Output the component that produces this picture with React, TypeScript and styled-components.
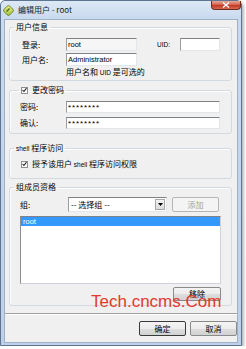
import React from "react";
import styled, { createGlobalStyle } from "styled-components";

const Global = createGlobalStyle`
  html, body { margin: 0; padding: 0; background: #ffffff; }
  body {
    font-family: "Liberation Sans", "Noto Sans CJK SC", sans-serif;
    font-size: 8px;
    color: #000;
  }
  * { box-sizing: border-box; }
`;

const CJK = `"Noto Sans CJK SC", "Liberation Sans", sans-serif`;

const Window = styled.div`
  position: relative;
  width: 242px;
  height: 346px;
  border: 1px solid #5c7593;
  border-radius: 5px 5px 0 0;
  background: linear-gradient(#dde8f5, #c9daee 18px, #c2d4ea 60%, #bfd1e8);
  box-shadow: 2px 2px 3px rgba(0, 0, 0, 0.28);
  display: flex;
  flex-direction: column;
  padding: 0 0 2px 0;
`;

const TitleBar = styled.div`
  height: 18px;
  display: flex;
  align-items: center;
  padding-left: 2px;
  gap: 4px;
`;

const TitleText = styled.span`
  font-family: ${CJK};
  font-size: 8px;
  line-height: 10px;
  color: #1a1a1a;
  flex: 1;
`;

const CloseButton = styled.div`
  align-self: flex-start;
  width: 30px;
  height: 9px;
  border: 1px solid #6e2b20;
  border-top: none;
  border-radius: 0 0 4px 4px;
  background: linear-gradient(#e9a899, #d56650 45%, #c23a24 55%, #d9684f);
  display: flex;
  align-items: center;
  justify-content: center;
`;

const Client = styled.div`
  flex: 1;
  margin: 0 3px;
  background: #f0f0f0;
  border: 1px solid #9fb1c7;
  display: flex;
  flex-direction: column;
`;

const Groups = styled.div`
  display: flex;
  flex-direction: column;
  margin: 0 5px 0 4px;
  padding-top: 2px;
`;

const Group = styled.fieldset<{ $mt: number }>`
  margin: ${(p) => p.$mt}px 0 0 0;
  padding: 0;
  border: 1px solid #d2d9df;
  border-radius: 3px;
  box-shadow: inset 1px 1px 0 #ffffff;
  min-width: 0;
`;

const Legend = styled.legend<{ $ml: number }>`
  margin-left: ${(p) => p.$ml}px;
  padding: 0 2px;
  height: 10px;
  line-height: 10px;
  font-family: ${CJK};
  font-size: 8px;
  display: flex;
  align-items: center;
  gap: 4px;
`;

const GroupBody = styled.div<{ $pt: number; $pb: number; $pl: number }>`
  padding: ${(p) => `${p.$pt}px 10px ${p.$pb}px ${p.$pl}px`};
  display: flex;
  flex-direction: column;
`;

const Row = styled.div<{ $mt?: number; $h: number }>`
  display: flex;
  align-items: center;
  height: ${(p) => p.$h}px;
  margin-top: ${(p) => p.$mt ?? 0}px;
`;

const Label = styled.span<{ $w: number }>`
  width: ${(p) => p.$w}px;
  flex: none;
  font-family: ${CJK};
  font-size: 8px;
  line-height: 10px;
`;

const TextBox = styled.div<{ $w: number; $ro?: boolean }>`
  width: ${(p) => p.$w}px;
  height: 100%;
  flex: none;
  border: 1px solid #e2e7ec;
  border-top-color: #7d8287;
  border-left-color: #9a9ea3;
  background: ${(p) => (p.$ro ? "#f6f6f6" : "#ffffff")};
  font-family: "Liberation Sans", sans-serif;
  font-size: 7.5px;
  line-height: 10px;
  padding: 0 1px;
  display: flex;
  align-items: center;
  white-space: nowrap;
  overflow: hidden;
`;

const Masked = styled.span`
  letter-spacing: 0.9px;
  font-size: 8px;
  padding-top: 2px;
`;

const Note = styled.div`
  margin: 1px 0 0 44px;
  font-family: ${CJK};
  font-size: 8px;
  line-height: 10px;
  height: 10px;
`;

const Check = styled.span`
  width: 7px;
  height: 7px;
  flex: none;
  border: 1px solid #8e8f8f;
  background: #fff;
  display: flex;
  align-items: center;
  justify-content: center;
`;

const CheckText = styled.span`
  font-family: ${CJK};
  font-size: 8px;
  line-height: 10px;
`;

const Small = styled.span`
  font-family: "Liberation Sans", sans-serif;
  font-size: 6.5px;
`;

const Select = styled.div`
  width: 99px;
  height: 100%;
  border: 1px solid #e2e7ec;
  border-top-color: #7d8287;
  border-left-color: #9a9ea3;
  background: #fff;
  display: flex;
  align-items: stretch;
`;

const SelectText = styled.span`
  flex: 1;
  font-family: ${CJK};
  font-size: 8px;
  line-height: 13px;
  padding-left: 2px;
`;

const DropButton = styled.span`
  width: 10px;
  margin: 1px;
  border: 1px solid #a9a9a9;
  background: linear-gradient(#f4f4f4, #dcdcdc);
  display: flex;
  align-items: center;
  justify-content: center;
`;

const Button = styled.div<{ $w: number; $disabled?: boolean; $default?: boolean }>`
  width: ${(p) => p.$w}px;
  height: 100%;
  flex: none;
  border: 1px solid ${(p) => (p.$default ? "#3a3a3a" : p.$disabled ? "#b5b5b5" : "#8a8a8a")};
  border-radius: 2px;
  background: ${(p) =>
    p.$disabled ? "#f4f4f4" : "linear-gradient(#f4f4f4, #ececec 50%, #dedede 51%, #d2d2d2)"};
  color: ${(p) => (p.$disabled ? "#a3a3a3" : "#000")};
  font-family: ${CJK};
  font-size: 8px;
  line-height: 10px;
  display: flex;
  align-items: center;
  justify-content: center;
`;

const ListBox = styled.div`
  height: 68px;
  margin-top: 4px;
  border: 1px solid #cdd3d8;
  border-top-color: #7d8287;
  border-left-color: #8a8f94;
  background: #fff;
  display: flex;
  flex-direction: column;
`;

const ListItem = styled.div<{ $sel?: boolean }>`
  height: 9px;
  line-height: 9px;
  padding-left: 2px;
  font-size: 7.5px;
  background: ${(p) => (p.$sel ? "#3399ff" : "transparent")};
  color: ${(p) => (p.$sel ? "#fff" : "#000")};
`;

const RightRow = styled.div`
  display: flex;
  justify-content: flex-end;
  height: 14px;
  margin-top: 3px;
`;

const Separator = styled.div`
  margin-top: 7px;
  height: 2px;
  border-top: 1px solid #a0a0a0;
  border-bottom: 1px solid #ffffff;
`;

const Footer = styled.div`
  display: flex;
  justify-content: flex-end;
  gap: 4px;
  height: 15px;
  margin-top: 6px;
  padding-right: 0px;
`;

const Watermark = styled.div`
  position: absolute;
  left: 90px;
  top: 292px;
  font-family: "Liberation Sans", sans-serif;
  font-size: 17px;
  line-height: 17px;
  color: #e23a2e;
  white-space: nowrap;
  pointer-events: none;
`;

const TickIcon = () => (
  <svg width="6" height="6" viewBox="0 0 6 6">
    <path d="M0.6 3 L2.3 4.8 L5.4 0.8" fill="none" stroke="#222" strokeWidth="1.3" />
  </svg>
);

const AppIcon = () => (
  <svg width="11" height="11" viewBox="0 0 11 11">
    <defs>
      <linearGradient id="ig" x1="0" y1="0" x2="1" y2="1">
        <stop offset="0" stopColor="#f3ee8a" />
        <stop offset="1" stopColor="#9cc23a" />
      </linearGradient>
    </defs>
    <rect x="1.5" y="1.5" width="8" height="8" rx="2" transform="rotate(45 5.5 5.5)" fill="url(#ig)" stroke="#5d7a25" strokeWidth="0.8" />
    <path d="M3.5 6.5 L6.5 3.5" stroke="#4f6b1c" strokeWidth="1.2" />
  </svg>
);

const CloseX = () => (
  <svg width="8" height="6" viewBox="0 0 8 6">
    <path d="M1 0.5 L7 5.5 M7 0.5 L1 5.5" stroke="#ffffff" strokeWidth="1.4" />
  </svg>
);

const DownArrow = () => (
  <svg width="5" height="3" viewBox="0 0 5 3">
    <path d="M0 0 L5 0 L2.5 3 Z" fill="#000" />
  </svg>
);

export default function App() {
  return (
    <>
      <Global />
      <Window>
        <TitleBar>
          <AppIcon />
          <TitleText>编辑用户 - root</TitleText>
          <CloseButton>
            <CloseX />
          </CloseButton>
        </TitleBar>
        <Client>
          <Groups>
            <Group $mt={0}>
              <Legend $ml={4}>用户信息</Legend>
              <GroupBody $pt={6} $pb={3} $pl={12}>
                <Row $h={13}>
                  <Label $w={44}>登录:</Label>
                  <TextBox $w={71} $ro>
                    root
                  </TextBox>
                  <Label $w={23} style={{ marginLeft: 20 }}>
                    <Small>UID:</Small>
                  </Label>
                  <TextBox $w={40} />
                </Row>
                <Row $h={13} $mt={2}>
                  <Label $w={44}>用户名:</Label>
                  <TextBox $w={71}>Administrator</TextBox>
                </Row>
                <Note>
                  用户名和 <Small>UID</Small> 是可选的
                </Note>
              </GroupBody>
            </Group>

            <Group $mt={4}>
              <Legend $ml={9}>
                <Check>
                  <TickIcon />
                </Check>
                更改密码
              </Legend>
              <GroupBody $pt={6} $pb={4} $pl={10}>
                <Row $h={12}>
                  <Label $w={46}>密码:</Label>
                  <TextBox $w={154}>
                    <Masked>********</Masked>
                  </TextBox>
                </Row>
                <Row $h={12} $mt={4}>
                  <Label $w={46}>确认:</Label>
                  <TextBox $w={154}>
                    <Masked>********</Masked>
                  </TextBox>
                </Row>
              </GroupBody>
            </Group>

            <Group $mt={9}>
              <Legend $ml={4}>
                <span>
                  <Small>shell</Small> 程序访问
                </span>
              </Legend>
              <GroupBody $pt={6} $pb={9} $pl={11}>
                <Row $h={10} style={{ gap: 4 }}>
                  <Check>
                    <TickIcon />
                  </Check>
                  <CheckText>
                    授予该用户 <Small>shell</Small> 程序访问权限
                  </CheckText>
                </Row>
              </GroupBody>
            </Group>

            <Group $mt={3}>
              <Legend $ml={4}>组成员资格</Legend>
              <GroupBody $pt={5} $pb={4} $pl={10}>
                <Row $h={15}>
                  <Label $w={48}>组:</Label>
                  <Select>
                    <SelectText>-- 选择组 --</SelectText>
                    <DropButton>
                      <DownArrow />
                    </DropButton>
                  </Select>
                  <Button $w={47} $disabled style={{ marginLeft: 5 }}>
                    添加
                  </Button>
                </Row>
                <ListBox>
                  <ListItem $sel>root</ListItem>
                </ListBox>
                <RightRow>
                  <Button $w={48}>移除</Button>
                </RightRow>
              </GroupBody>
            </Group>
          </Groups>
          <Separator />
          <Footer>
            <Button $w={47} $default>
              确定
            </Button>
            <Button $w={47}>取消</Button>
          </Footer>
        </Client>
        <Watermark>Tech.cncms.Com</Watermark>
      </Window>
    </>
  );
}
